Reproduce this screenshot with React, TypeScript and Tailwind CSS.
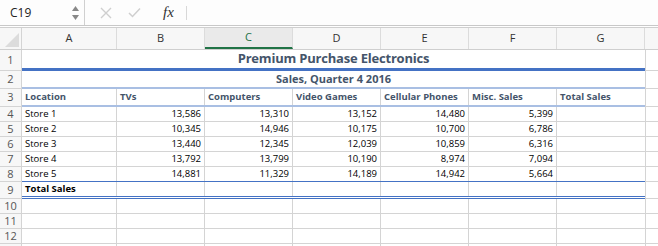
import React from 'react';

const COLS = [
  { key: 'A', w: 95 },
  { key: 'B', w: 88 },
  { key: 'C', w: 88 },
  { key: 'D', w: 88 },
  { key: 'E', w: 88 },
  { key: 'F', w: 88 },
  { key: 'G', w: 88 },
];

const stores = [
  ['Store 1', '13,586', '13,310', '13,152', '14,480', '5,399'],
  ['Store 2', '10,345', '14,946', '10,175', '10,700', '6,786'],
  ['Store 3', '13,440', '12,345', '12,039', '10,859', '6,316'],
  ['Store 4', '13,792', '13,799', '10,190', '8,974', '7,094'],
  ['Store 5', '14,881', '11,329', '14,189', '14,942', '5,664'],
];

const headers = ['Location', 'TVs', 'Computers', 'Video Games', 'Cellular Phones', 'Misc. Sales', 'Total Sales'];

interface RowProps {
  label: string;
  h: string;
  edge: string;
  children: React.ReactNode;
}

// one sheet row: row number, A..G content, then column H
const Row: React.FC<RowProps> = ({ label, h, edge, children }) => (
  <div className={`flex ${h}`}>
    <div className="w-[22px] shrink-0 flex items-center justify-center border-r border-b border-[#d4d4d4] bg-[#f7f7f7] text-[11px] text-[#555]">
      {label}
    </div>
    <div className={`flex w-[623px] shrink-0 ${edge}`}>{children}</div>
    <div className="flex-1 border-l border-b border-[#d4d4d4]" />
  </div>
);

const App: React.FC = () => {
  return (
    <div className="w-[658px] h-[246px] overflow-hidden bg-white" style={{ fontFamily: '"Open Sans", "Liberation Sans", sans-serif' }}>
      {/* formula bar */}
      <div className="h-[26px] flex items-stretch bg-[#fdfdfd] border-b border-[#c8c8c8]">
        <div className="w-[85px] flex items-center justify-between pl-[10px] pr-[4px] border-r border-[#d0d0d0]">
          <span className="text-[12px] text-[#222]">C19</span>
          <svg width="9" height="18" viewBox="0 0 9 18">
            <path d="M4.5 2 L8 7 L1 7 Z" fill="#888" />
            <path d="M4.5 16 L8 11 L1 11 Z" fill="#888" />
          </svg>
        </div>
        <div className="flex items-center pl-[15px] gap-[16px]">
          <svg width="12" height="12" viewBox="0 0 12 12">
            <path d="M1 1 L11 11 M11 1 L1 11" stroke="#cfcfcf" strokeWidth="1.4" />
          </svg>
          <svg width="13" height="11" viewBox="0 0 13 11">
            <path d="M1 6 L4.5 9.5 L12 1.5" stroke="#cfcfcf" strokeWidth="1.5" fill="none" />
          </svg>
          <span className="ml-[6px] text-[15px] italic text-[#333]" style={{ fontFamily: '"Liberation Serif", serif' }}>fx</span>
          <div className="w-px h-[14px] bg-[#d8d8d8] ml-[-4px]" />
        </div>
      </div>

      {/* column headers */}
      <div className="mt-px flex h-[23px] bg-[#f7f7f7] border-t border-b border-[#cfcfcf] text-[11px] text-[#333]">
        <div className="w-[22px] shrink-0 border-r border-[#d4d4d4] relative overflow-hidden">
          <svg className="absolute right-[2px] bottom-[2px]" width="14" height="14" viewBox="0 0 14 14">
            <path d="M14 0 L14 14 L0 14 Z" fill="#dcdcdc" />
          </svg>
        </div>
        {COLS.map((c) => (
          <div
            key={c.key}
            style={{ width: c.w }}
            className={`shrink-0 flex items-center justify-center border-r border-[#dcdcdc] ${c.key === 'C' ? 'text-[#217346] border-b-2 border-b-[#217346] bg-[#eaeaea]' : ''}`}
          >
            {c.key}
          </div>
        ))}
        <div className="flex-1" />
      </div>

      {/* row 1 title */}
      <Row label="1" h="h-[21px]" edge="border-b-[3px] border-[#4472c4]">
        <div className="flex-1 flex items-center justify-center text-[13px] tracking-[-0.2px] font-bold text-[#44546a]">
          Premium Purchase Electronics
        </div>
      </Row>

      {/* row 2 subtitle */}
      <Row label="2" h="h-[18px]" edge="border-b-2 border-[#a9bfe3]">
        <div className="flex-1 flex items-center justify-center text-[11px] font-bold text-[#44546a]">
          Sales, Quarter 4 2016
        </div>
      </Row>

      {/* row 3 headings */}
      <Row label="3" h="h-[18px]" edge="border-b-2 border-[#a9bfe3]">
        {headers.map((t, i) => (
          <div
            key={t}
            style={{ width: COLS[i].w }}
            className="shrink-0 flex items-center px-[3px] border-r border-[#d4d4d4] last:border-r-0 text-[9.5px] font-bold text-[#44546a]"
          >
            {t}
          </div>
        ))}
      </Row>

      {/* rows 4-8 */}
      {stores.map((r, ri) => (
        <Row
          key={r[0]}
          label={String(ri + 4)}
          h="h-[15px]"
          edge={ri === 4 ? 'border-b border-[#4472c4]' : 'border-b border-[#d4d4d4]'}
        >
          {COLS.map((c, i) => (
            <div
              key={c.key}
              style={{ width: c.w }}
              className={`shrink-0 flex items-center px-[3px] border-r border-[#d4d4d4] last:border-r-0 text-[9.5px] text-black ${i === 0 ? '' : 'justify-end'}`}
            >
              {r[i] ?? ''}
            </div>
          ))}
        </Row>
      ))}

      {/* row 9 total */}
      <Row label="9" h="h-[17px]" edge="border-b-[3px] border-double border-[#4472c4]">
        {COLS.map((c, i) => (
          <div
            key={c.key}
            style={{ width: c.w }}
            className="shrink-0 flex items-center px-[3px] border-r border-[#d4d4d4] last:border-r-0 text-[9.5px] font-bold text-black"
          >
            {i === 0 ? 'Total Sales' : ''}
          </div>
        ))}
      </Row>

      {/* empty rows */}
      {['10', '11', '12', ''].map((n, i) => (
        <Row key={i} label={n} h="h-[15px]" edge="border-b border-[#d4d4d4]">
          {COLS.map((c) => (
            <div key={c.key} style={{ width: c.w }} className="shrink-0 border-r border-[#d4d4d4] last:border-r-0" />
          ))}
        </Row>
      ))}
    </div>
  );
};

export default App;
